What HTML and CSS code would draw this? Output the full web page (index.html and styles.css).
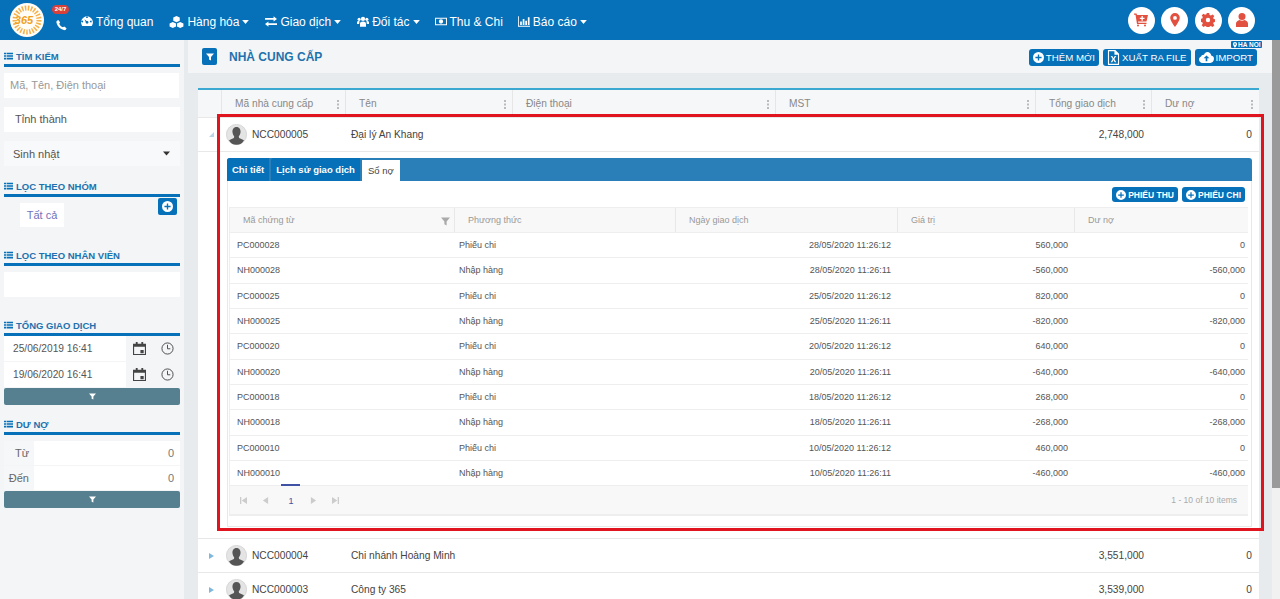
FILE: index.html
```html
<!DOCTYPE html>
<html>
<head>
    <meta charset="utf-8">
    <title>Nhà cung cấp</title>
    <link rel="stylesheet" href="styles.css">
</head>
<body>
    <svg class="defs" width="0" height="0">
        <symbol id="i-list" viewBox="0 0 16 14"><path d="M0 1h4v3H0zM0 5.500h4v3H0zM0 10h4v3H0zM5 1h11v3H5zM5 5.500h11v3H5zM5 10h11v3H5z"/></symbol>
        <symbol id="i-filter" viewBox="0 0 16 16"><path d="M0 1h16L10 8v7l-4-2V8z"/></symbol>
        <symbol id="i-plus" viewBox="0 0 16 16"><path fill-rule="evenodd" d="M8 0a8 8 0 1 1 0 16A8 8 0 0 1 8 0zM7 3.500v3.500H3.500v2H7v3.500h2V9h3.500V7H9V3.500z"/></symbol>
        <symbol id="i-caret" viewBox="0 0 10 6"><path d="M0 0h10L5 6z"/></symbol>
        <symbol id="i-user" viewBox="0 0 28 28">
            <circle cx="14" cy="14" r="13.500" fill="#e4e4e4" stroke="#cfcfcf"/>
            <path fill="#555" d="M14 4c3.600 0 5.600 3 5.400 6.500-.2 2.500-1.200 4.600-2.400 6l.5 2 6.500 3C22 25.500 18.500 27.500 14 27.500S6 25.500 4 21.500l6.500-3 .5-2c-1.200-1.400-2.200-3.500-2.400-6C8.400 7 10.400 4 14 4z"/>
        </symbol>
        <symbol id="i-calendar" viewBox="0 0 14 14"><path fill-rule="evenodd" d="M3 0h2v2h4V0h2v2h3v12H0V2h3zM1.200 5v7.800h11.600V5zM8 8.500h3.500V12H8z"/></symbol>
        <symbol id="i-clock" viewBox="0 0 14 14"><circle cx="7" cy="7" r="6" fill="none" stroke="currentColor" stroke-width="1"/><path d="M7 3v4.300h3" fill="none" stroke="currentColor" stroke-width="1"/></symbol>
        <symbol id="i-first" viewBox="0 0 8 8"><path d="M0 0h1.500v8H0zM8 0v8L2 4z"/></symbol>
        <symbol id="i-prev" viewBox="0 0 8 8"><path d="M7 0v8L1 4z"/></symbol>
        <symbol id="i-next" viewBox="0 0 8 8"><path d="M1 0v8l6-4z"/></symbol>
        <symbol id="i-last" viewBox="0 0 8 8"><path d="M0 0v8l6-4zM6.500 0H8v8H6.500z"/></symbol>
    </svg>

    <!--top bar-->
    <div class="topbar">
        <div class="logo">
            <svg class="logo-ring" viewBox="0 0 34 34"><circle cx="17" cy="17" r="12" fill="none" stroke="#f6b04a" stroke-width="5" stroke-dasharray="1.500 1.500"/></svg>
            <span>365</span>
        </div>
        <div class="hotline">
            <span class="badge">24/7</span>
            <svg viewBox="0 0 12 12"><path d="M2.500 0.500 4.500 3 3.500 4.500C4 6 6 8 7.500 8.500L9 7.500l2.500 2c-.5 1.500-1.500 2.500-3 2C4.500 10.500 1.500 7.500.5 3.500.2 2 1 1 2.500.5z"/></svg>
        </div>
        <ul class="menu">
            <li class="m1"><svg viewBox="0 0 14 12"><path fill-rule="evenodd" d="M7 0a7 7 0 0 1 6 10.500l-.5.700h-11l-.5-.7A7 7 0 0 1 7 0zM6.500 5.500 4 3.500l1.500 3.200a1.600 1.600 0 1 0 1-1.200zM2.500 6a1 1 0 1 0 0 .1zM12.500 6a1 1 0 1 0 0 .1zM7.500 2a1 1 0 1 0-1 0z"/></svg>Tổng quan</li>
            <li class="m2"><svg class="wide" viewBox="0 0 16 13"><path d="M8 0l3.500 1.500v3.700L8 6.700 4.500 5.200V1.500zM4 6.500l3.500 1.500v3.500L4 13 .5 11.500V8zM12 6.500 15.500 8v3.500L12 13l-3.500-1.500V8z"/></svg>Hàng hóa<svg class="caret"><use href="#i-caret"/></svg></li>
            <li class="m3"><svg viewBox="0 0 14 12"><path d="M10 0l4 3-4 3V4H0V2h10zM4 6v2h10v2H4v2L0 9z"/></svg>Giao dịch<svg class="caret"><use href="#i-caret"/></svg></li>
            <li class="m4"><svg viewBox="0 0 14 12"><circle cx="7" cy="3" r="2.500"/><circle cx="2.500" cy="3.500" r="1.800"/><circle cx="11.500" cy="3.500" r="1.800"/><path d="M3.500 12V8.500C3.500 7 5 6 7 6s3.500 1 3.500 2.500V12zM0 9V7c0-1 1-1.500 2.500-1.500l.5.500-.5 3zM14 9V7c0-1-1-1.500-2.500-1.500L11 6l.5 3z"/></svg>Đối tác<svg class="caret"><use href="#i-caret"/></svg></li>
            <li class="m5"><svg viewBox="0 0 14 11"><path fill-rule="evenodd" d="M0 1h14v9H0zM1.200 2.200v6.600h11.600V2.200zM7 3a2.500 2.500 0 1 1 0 5 2.500 2.500 0 0 1 0-5z"/></svg>Thu &amp; Chi</li>
            <li class="m6"><svg viewBox="0 0 14 12"><path d="M0 0h1v11h13v1H0zM2.500 6h2v4h-2zM5.500 3h2v7h-2zM8.500 5h2v5h-2zM11.500 1h2v9h-2z"/></svg>Báo cáo<svg class="caret"><use href="#i-caret"/></svg></li>
        </ul>
        <div class="round-btns">
            <a class="round"><svg viewBox="0 0 14 13"><path fill-rule="evenodd" d="M0 0h2.500l.5 1.500h11L12.500 8H4l.3 1.200H12.500v1.300H3L1.500 1.300H0zM7.500 2.500v1.700H5.800v1.300h1.700v1.700h1.300V5.500h1.700V4.200H8.800V2.500zM4 11a1 1 0 1 1 0 2 1 1 0 0 1 0-2zM11 11a1 1 0 1 1 0 2 1 1 0 0 1 0-2z"/></svg></a>
            <a class="round"><svg viewBox="0 0 14 14"><path fill-rule="evenodd" d="M7 0a4.800 4.800 0 0 1 4.800 4.800C11.800 8 7 14 7 14S2.200 8 2.200 4.800A4.800 4.800 0 0 1 7 0zM7 3a1.900 1.900 0 1 0 0 3.800A1.900 1.900 0 0 0 7 3z"/></svg></a>
            <a class="round"><svg viewBox="0 0 14 14"><path fill-rule="evenodd" d="M5.800 0h2.400l.4 2 1.300.5 1.700-1.100 1.700 1.700-1.100 1.700.5 1.300 2 .4v2.400l-2 .4-.5 1.300 1.100 1.700-1.700 1.700-1.700-1.100-1.300.5-.4 2H5.800l-.4-2-1.300-.5-1.700 1.100-1.700-1.700 1.100-1.700-.5-1.300-2-.4V5.800l2-.4.5-1.300-1.100-1.700 1.700-1.700 1.700 1.100 1.300-.5zM7 4.800a2.200 2.200 0 1 0 0 4.400 2.200 2.200 0 0 0 0-4.400z"/></svg></a>
            <a class="round"><svg viewBox="0 0 14 14"><circle cx="7" cy="3.500" r="3.500"/><path d="M1 14v-3.500C1 8.500 3 7.500 4.500 7c1.500 1 3.500 1 5 0 1.500.5 3.500 1.500 3.500 3.500V14z"/></svg></a>
        </div>
    </div>

    <div class="page">
        <!--left filter column-->
        <div class="sidebar">
            <div class="side-title first"><svg><use href="#i-list"/></svg>TÌM KIẾM</div>
            <div class="field placeholder">Mã, Tên, Điện thoại</div>
            <div class="field gap-top indent">Tỉnh thành</div>
            <div class="field gray gap-top sinh"><span>Sinh nhật</span><svg class="caret dark"><use href="#i-caret"/></svg></div>

            <div class="side-title t2"><svg><use href="#i-list"/></svg>LỌC THEO NHÓM</div>
            <div class="group-row">
                <span class="tag">Tất cả</span>
                <a class="add-group"><svg><use href="#i-plus"/></svg></a>
            </div>

            <div class="side-title t3"><svg><use href="#i-list"/></svg>LỌC THEO NHÂN VIÊN</div>
            <div class="field"></div>

            <div class="side-title t4"><svg><use href="#i-list"/></svg>TỔNG GIAO DỊCH</div>
            <div class="date-row">
                <span class="date-val">25/06/2019 16:41</span>
                <svg class="cal"><use href="#i-calendar"/></svg>
                <svg class="clk"><use href="#i-clock"/></svg>
            </div>
            <div class="date-row">
                <span class="date-val">19/06/2020 16:41</span>
                <svg class="cal"><use href="#i-calendar"/></svg>
                <svg class="clk"><use href="#i-clock"/></svg>
            </div>
            <a class="filter-btn"><svg><use href="#i-filter"/></svg></a>

            <div class="side-title t5"><svg><use href="#i-list"/></svg>DƯ NỢ</div>
            <div class="num-row"><label>Từ</label><span>0</span></div>
            <div class="num-row"><label>Đến</label><span>0</span></div>
            <a class="filter-btn"><svg><use href="#i-filter"/></svg></a>
        </div>

        <div class="content">
            <div class="titlebar">
                <a class="title-icon"><svg><use href="#i-filter"/></svg></a>
                <h1>NHÀ CUNG CẤP</h1>
                <span class="city">
                    <svg viewBox="0 0 14 14"><path fill-rule="evenodd" d="M7 0a4.800 4.800 0 0 1 4.800 4.800C11.800 8 7 14 7 14S2.200 8 2.200 4.800A4.800 4.800 0 0 1 7 0zM7 3a1.900 1.900 0 1 0 0 3.800A1.900 1.900 0 0 0 7 3z"/></svg>HA NOI
                </span>
                <div class="tools">
                    <a class="btn"><svg><use href="#i-plus"/></svg>THÊM MỚI</a>
                    <a class="btn"><svg class="doc" viewBox="0 0 14 16"><path fill-rule="evenodd" d="M1 0h8l4 4v12H1zM2.200 1.200v13.600h9.600V5H8V1.200zM4 6.500h1.700L7 8.700l1.300-2.200H10L7.900 9.700 10 13H8.300L7 10.800 5.700 13H4l2.100-3.300z"/></svg>XUẤT RA FILE</a>
                    <a class="btn"><svg class="cloud" viewBox="0 0 18 13"><path fill-rule="evenodd" d="M10 0c2.500 0 4.300 1.600 4.700 4 2 .3 3.300 1.900 3.300 4 0 2.700-2 5-4.500 5h-10C1.500 13 0 11 0 9c0-1.700 1-3 2.500-3.600C3 4 4.300 3 6 3.300 6.800 1.300 8.200 0 10 0zM9 4 5.500 7.500H8V11h2V7.500h2.500z"/></svg>IMPORT</a>
                </div>
            </div>

            <div class="grid-wrap">
                <div class="grid">
                    <div class="grid-head cols">
                        <div></div>
                        <div class="hd">Mã nhà cung cấp<i></i></div>
                        <div class="hd">Tên<i></i></div>
                        <div class="hd">Điện thoại<i></i></div>
                        <div class="hd">MST<i></i></div>
                        <div class="hd">Tổng giao dịch<i></i></div>
                        <div class="hd">Dư nợ<i></i></div>
                    </div>

                    <div class="grid-row cols open">
                        <div class="arrow down"></div>
                        <div class="who"><svg><use href="#i-user"/></svg>NCC000005</div>
                        <div>Đại lý An Khang</div>
                        <div></div>
                        <div></div>
                        <div class="r">2,748,000</div>
                        <div class="r">0</div>
                    </div>

                    <div class="detail">
                        <div class="tabs">
                            <a>Chi tiết</a>
                            <a>Lịch sử giao dịch</a>
                            <a class="on">Sổ nợ</a>
                        </div>
                        <div class="tab-body">
                            <div class="tab-tools">
                                <a class="btn small"><svg><use href="#i-plus"/></svg>PHIẾU THU</a>
                                <a class="btn small"><svg><use href="#i-plus"/></svg>PHIẾU CHI</a>
                            </div>
                            <div class="sub">
                                <div class="sub-head subcols">
                                    <div>Mã chứng từ<svg><use href="#i-filter"/></svg></div>
                                    <div>Phương thức</div>
                                    <div>Ngày giao dịch</div>
                                    <div>Giá trị</div>
                                    <div>Dư nợ</div>
                                </div>
                                <div class="sub-row subcols"><div>PC000028</div><div>Phiếu chi</div><div class="r">28/05/2020 11:26:12</div><div class="r">560,000</div><div class="r">0</div></div>
                                <div class="sub-row subcols"><div>NH000028</div><div>Nhập hàng</div><div class="r">28/05/2020 11:26:11</div><div class="r">-560,000</div><div class="r">-560,000</div></div>
                                <div class="sub-row subcols"><div>PC000025</div><div>Phiếu chi</div><div class="r">25/05/2020 11:26:12</div><div class="r">820,000</div><div class="r">0</div></div>
                                <div class="sub-row subcols"><div>NH000025</div><div>Nhập hàng</div><div class="r">25/05/2020 11:26:11</div><div class="r">-820,000</div><div class="r">-820,000</div></div>
                                <div class="sub-row subcols"><div>PC000020</div><div>Phiếu chi</div><div class="r">20/05/2020 11:26:12</div><div class="r">640,000</div><div class="r">0</div></div>
                                <div class="sub-row subcols"><div>NH000020</div><div>Nhập hàng</div><div class="r">20/05/2020 11:26:11</div><div class="r">-640,000</div><div class="r">-640,000</div></div>
                                <div class="sub-row subcols"><div>PC000018</div><div>Phiếu chi</div><div class="r">18/05/2020 11:26:12</div><div class="r">268,000</div><div class="r">0</div></div>
                                <div class="sub-row subcols"><div>NH000018</div><div>Nhập hàng</div><div class="r">18/05/2020 11:26:11</div><div class="r">-268,000</div><div class="r">-268,000</div></div>
                                <div class="sub-row subcols"><div>PC000010</div><div>Phiếu chi</div><div class="r">10/05/2020 11:26:12</div><div class="r">460,000</div><div class="r">0</div></div>
                                <div class="sub-row subcols"><div>NH000010</div><div>Nhập hàng</div><div class="r">10/05/2020 11:26:11</div><div class="r">-460,000</div><div class="r">-460,000</div></div>
                                <div class="pager">
                                    <svg><use href="#i-first"/></svg>
                                    <svg><use href="#i-prev"/></svg>
                                    <span class="cur">1</span>
                                    <svg><use href="#i-next"/></svg>
                                    <svg><use href="#i-last"/></svg>
                                    <em>1 - 10 of 10 items</em>
                                </div>
                            </div>
                        </div>
                    </div>

                    <div class="grid-row cols">
                        <div class="arrow"></div>
                        <div class="who"><svg><use href="#i-user"/></svg>NCC000004</div>
                        <div>Chi nhánh Hoàng Minh</div>
                        <div></div>
                        <div></div>
                        <div class="r">3,551,000</div>
                        <div class="r">0</div>
                    </div>
                    <div class="grid-row cols">
                        <div class="arrow"></div>
                        <div class="who"><svg><use href="#i-user"/></svg>NCC000003</div>
                        <div>Công ty 365</div>
                        <div></div>
                        <div></div>
                        <div class="r">3,539,000</div>
                        <div class="r">0</div>
                    </div>
                </div>
            </div>
        </div>
        <div class="scrollbar"><div class="thumb"></div></div>
    </div>

    <!--red mark on the screenshot-->
    <div class="redmark"></div>
</body>
</html>
```

FILE: styles.css
```css
*{
	margin: 0;
	padding: 0;
	box-sizing: border-box;
}
html,body{
	height: 100%;
	overflow: hidden;
}
body{
	font-family: "Liberation Sans", "Noto Sans", Arial, sans-serif;
	font-size: 10px;
	color: #444;
	background: #e8ebee;
}
a{
	display: block;
	text-decoration: none;
}
.defs{
	position: absolute;
}
.topbar{
	display: flex;
	align-items: center;
	height: 40px;
	padding-left: 10px;
	background: #0670b8;
	color: #fff;
}
.logo{
	position: relative;
	width: 34px;
	height: 34px;
	border-radius: 50%;
	background: #fffdf5;
	display: flex;
	align-items: center;
	justify-content: center;
}
.logo-ring{
	position: absolute;
	left: 0;
	top: 0;
	width: 34px;
	height: 34px;
}
.logo span{
	position: relative;
	left: -3px;
	font-size: 11px;
	font-weight: bold;
	font-style: italic;
	color: #f0a020;
}
.hotline{
	position: relative;
	width: 12px;
	height: 12px;
	margin-left: 12px;
	margin-top: 9px;
}
.hotline svg{
	display: block;
	width: 11px;
	height: 12px;
	fill: #fff;
}
.badge{
	position: absolute;
	left: -4px;
	top: -14px;
	width: 17px;
	height: 9px;
	border-radius: 5px;
	background: #d9403a;
	font-size: 6px;
	font-weight: bold;
	line-height: 9px;
	text-align: center;
}
.menu{
	display: flex;
	align-items: center;
	list-style: none;
	font-size: 12px;
	margin-top: 3px;
}
.menu li{
	display: flex;
	align-items: center;
	white-space: nowrap;
}
.menu li svg{
	width: 12px;
	height: 11px;
	margin-right: 3px;
	fill: #fff;
}
.menu li svg.wide{
	width: 15px;
	height: 12px;
}
.menu li svg.caret{
	width: 7px;
	height: 4px;
	margin: 0 0 0 3px;
}
.m1{margin-left: 13px;}
.m2{margin-left: 16px;}
.m3{margin-left: 16px;}
.m4{margin-left: 16px;}
.m5{margin-left: 15px;}
.m6{margin-left: 15px;}
.round-btns{
	display: flex;
	gap: 6.500px;
	margin-left: auto;
	margin-right: 25px;
}
.round{
	display: flex;
	align-items: center;
	justify-content: center;
	width: 27px;
	height: 27px;
	border-radius: 50%;
	background: #fff;
}
.round svg{
	width: 14px;
	height: 14px;
	fill: #e2503f;
}

.page{
	display: flex;
	height: 559px;
}
.sidebar{
	flex: none;
	width: 184px;
	padding: 0 4px;
	background: #f3f5f7;
}
.side-title{
	display: flex;
	align-items: center;
	height: 18px;
	border-bottom: 3px solid #0670b8;
	font-size: 9.500px;
	font-weight: bold;
	color: #1e72ae;
	padding-bottom: 1px;
}
.side-title svg{
	width: 9px;
	height: 8px;
	margin-right: 3px;
	fill: #0670b8;
}
.side-title.first{margin-top: 9px;}
.t2{margin-top: 13px;}
.t3{margin-top: 21px;}
.t4{margin-top: 21px;}
.t5{margin-top: 12px;}
.field{
	height: 25px;
	margin-top: 6px;
	background: #fff;
	padding-left: 6px;
	font-size: 11px;
	line-height: 24px;
	color: #555;
}
.placeholder{
	color: #999;
	margin-right: 1px;
}
.gap-top{margin-top: 9px;}
.indent{padding-left: 11px;}
.gray{
	background: #f8f9fa;
}
.sinh{
	display: flex;
	align-items: center;
	justify-content: space-between;
	padding: 0 10px 0 9px;
	margin-top: 9px;
}
.caret.dark{
	width: 7px;
	height: 5px;
	fill: #333;
}
.group-row{
	position: relative;
	height: 30px;
}
.tag{
	position: absolute;
	left: 16px;
	top: 6px;
	width: 44px;
	height: 24px;
	background: #fff;
	font-size: 11px;
	line-height: 24px;
	text-align: center;
	color: #7272b8;
}
.add-group{
	position: absolute;
	right: 3px;
	top: 1px;
	display: flex;
	align-items: center;
	justify-content: center;
	width: 19px;
	height: 17px;
	border-radius: 2px;
	background: #0670b8;
}
.add-group svg{
	width: 11px;
	height: 11px;
	fill: #fff;
}
.date-row{
	display: flex;
	align-items: center;
	height: 25px;
	margin-bottom: 1px;
	background: #f3f5f7;
}
.date-row:first-of-type{
	margin-top: 6px;
}
.date-val{
	width: 122px;
	height: 100%;
	background: #fff;
	padding-left: 9px;
	font-size: 10.200px;
	line-height: 25px;
	color: #555;
}
.cal{
	width: 13px;
	height: 13px;
	margin-left: 7px;
	fill: #444;
}
.clk{
	width: 13px;
	height: 13px;
	margin-left: 15px;
	fill: none;
	color: #444;
}
.filter-btn{
	display: flex;
	align-items: center;
	justify-content: center;
	height: 17px;
	border-radius: 2px;
	background: #567f8f;
}
.filter-btn svg{
	width: 7px;
	height: 7px;
	fill: #fff;
}
.num-row{
	display: flex;
	height: 24px;
	margin-bottom: 1px;
	background: #f3f5f7;
	font-size: 11px;
	line-height: 24px;
	color: #666;
}
.t5 + .num-row{
	margin-top: 6px;
}
.num-row label{
	width: 30px;
	text-align: right;
	padding-right: 5px;
	background: #f6f7f8;
}
.num-row span{
	flex: 1;
	text-align: right;
	background: #fff;
	padding-right: 6px;
	color: #777;
}

.content{
	flex: 1;
	min-width: 0;
	margin-left: 4px;
}
.titlebar{
	position: relative;
	display: flex;
	align-items: center;
	height: 33px;
	padding: 0 15px 0 14px;
	background: #f3f5f7;
}
.title-icon{
	display: flex;
	align-items: center;
	justify-content: center;
	width: 15px;
	height: 17px;
	border-radius: 2px;
	background: #0670b8;
}
.title-icon svg{
	width: 8px;
	height: 8px;
	fill: #fff;
}
h1{
	margin-left: 12px;
	font-size: 12px;
	font-weight: bold;
	color: #1e72ae;
}
.city{
	position: absolute;
	left: 1043px;
	top: 1px;
	display: flex;
	align-items: center;
	height: 7px;
	padding: 0 1px;
	border-radius: 1px;
	background: #0670b8;
	color: #fff;
	font-size: 6.500px;
	font-weight: bold;
}
.city svg{
	width: 6px;
	height: 6px;
	fill: #fff;
}
.tools{
	display: flex;
	gap: 4px;
	margin-left: auto;
	margin-top: 1px;
}
.btn{
	display: flex;
	align-items: center;
	height: 17px;
	padding: 0 4px;
	border-radius: 3px;
	background: #0670b8;
	color: #fff;
	font-size: 9.700px;
	white-space: nowrap;
}
.btn svg{
	width: 11px;
	height: 11px;
	margin-right: 2px;
	fill: #fff;
}
.btn svg.doc{
	width: 13px;
	height: 15px;
}
.btn svg.cloud{
	width: 15px;
}
.grid-wrap{
	padding: 15px 13px 0 10px;
}
.grid{
	background: #fff;
	border-top: 2px solid #3aa8d0;
}
.cols{
	display: grid;
	grid-template-columns: 23px 124px 167px 263px 260px 116px 108px;
}
.grid-head{
	height: 28px;
	background: #f6f7f8;
	border-bottom: 1px solid #e8e8e8;
	color: #888;
	font-size: 10.200px;
	line-height: 27px;
}
.hd{
	position: relative;
	padding-left: 13px;
	border-left: 1px solid #e6e6e6;
}
.hd i{
	position: absolute;
	right: 6px;
	top: 10px;
	width: 2px;
	height: 2px;
	background: #bbb;
	box-shadow: 0 3.500px 0 #bbb, 0 7px 0 #bbb;
}
.grid-row{
	height: 34px;
	align-items: center;
	border-bottom: 1px solid #e8e8e8;
	font-size: 10.200px;
	color: #444;
}
.grid-row > div:nth-child(3){
	padding-left: 6px;
}
.grid-row .r{
	text-align: right;
	padding-right: 7px;
}
.who{
	display: flex;
	align-items: center;
	padding-left: 5px;
	white-space: nowrap;
}
.who svg{
	width: 21px;
	height: 21px;
	margin-right: 5px;
	flex: none;
}
.arrow{
	justify-self: center;
	margin-left: 4px;
	width: 0;
	height: 0;
	border-left: 5px solid #7fb8dc;
	border-top: 3.500px solid transparent;
	border-bottom: 3.500px solid transparent;
}
.arrow.down{
	border: none;
	border-right: 5px solid #b9d6e8;
	border-top: 5px solid transparent;
}
.detail{
	height: 387px;
	padding: 6px 7px 0 29px;
	border-bottom: 1px solid #e8e8e8;
}
.tabs{
	display: flex;
	gap: 2px;
	height: 23px;
	background: #2a7fb8;
	border-radius: 3px 3px 0 0;
	font-size: 9.500px;
	font-weight: bold;
}
.tabs a{
	padding: 0 5px;
	margin-top: 0;
	line-height: 23px;
	color: #fff;
	background: #0670b8;
	border-radius: 3px 0 0 0;
}
.tabs a:nth-child(2){
	padding: 0 5px;
}
.tabs a.on{
	margin-top: 2px;
	padding: 0 6px;
	line-height: 21px;
	background: #fff;
	color: #444;
	font-weight: normal;
	border-radius: 0;
}
.tab-body{
	height: 346px;
	border: 1px solid #e8e8e8;
	border-top: none;
	padding-left: 1px;
	padding-right: 3px;
}
.tab-tools{
	display: flex;
	justify-content: flex-end;
	gap: 4px;
	height: 26px;
	padding-top: 6px;
	padding-right: 3px;
}
.btn.small{
	height: 15px;
	padding: 0 4px;
	font-size: 8.500px;
	font-weight: bold;
	letter-spacing: 0;
}
.btn.small svg{
	width: 10px;
	height: 10px;
}
.sub{
	border: 1px solid #eee;
	border-right: none;
}
.subcols{
	display: grid;
	grid-template-columns: 224px 221px 222px 177px 177px;
}
.sub-head{
	height: 25px;
	background: #f8f8f8;
	border-bottom: 1px solid #eee;
	color: #999;
	font-size: 9px;
	line-height: 24px;
}
.sub-head > div{
	position: relative;
	padding-left: 13px;
	border-left: 1px solid #e8e8e8;
}
.sub-head > div:first-child{
	border-left: none;
}
.sub-head svg{
	position: absolute;
	right: 4px;
	top: 9px;
	width: 9px;
	height: 9px;
	fill: #aaa;
}
.sub-row{
	height: 25.330px;
	align-items: center;
	border-bottom: 1px solid #eee;
	background: #fff;
	font-size: 9px;
	color: #555;
}
.sub-row > div{
	padding-left: 7px;
}
.sub-row > div:nth-child(2){
	padding-left: 5px;
}
.sub-row .r{
	padding: 0 6px 0 0;
	text-align: right;
}
.pager{
	position: relative;
	display: flex;
	align-items: center;
	height: 29px;
	padding-left: 10px;
	background: #f8f8f8;
	border-bottom: 1px solid #eee;
	margin-right: 0;
}
.pager svg{
	width: 7px;
	height: 7px;
	margin-right: 15px;
	fill: #ccc;
}
.pager svg:nth-child(2){
	margin-right: 14px;
}
.cur{
	position: relative;
	width: 20px;
	margin: 0 9px 0 -2px;
	text-align: center;
	color: #3f51a5;
	font-size: 9px;
	padding-top: 2px;
}
.cur:before{
	content: "";
	position: absolute;
	left: 0;
	top: -10px;
	width: 19px;
	height: 2px;
	background: #3f51a5;
}
.pager em{
	margin-left: auto;
	margin-right: 11px;
	font-style: normal;
	font-size: 8.500px;
	color: #aaa;
}
.scrollbar{
	flex: none;
	width: 8px;
	background: #f1f1f1;
}
.thumb{
	height: 448px;
	background: #9a9a9a;
}
.redmark{
	position: absolute;
	left: 217px;
	top: 114px;
	width: 1047px;
	height: 417px;
	border: 3px solid #e0141f;
	pointer-events: none;
}
```
